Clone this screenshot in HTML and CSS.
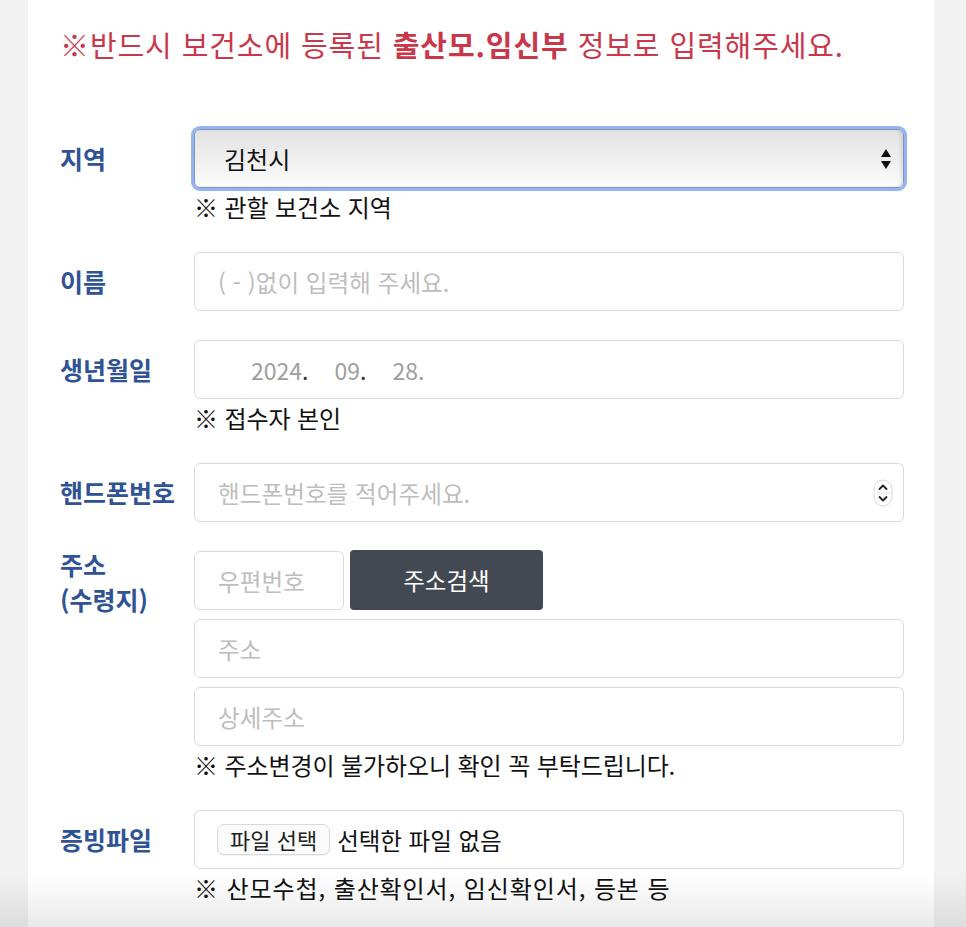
FILE: index.html
```html
<!DOCTYPE html>
<html lang="ko">
<head>
<meta charset="utf-8">
<title>출산모 정보 입력</title>
<link rel="stylesheet" href="styles.css">
</head>
<body>
<div class="page">
  <h2 class="notice">※반드시 보건소에 등록된 <strong>출산모.임신부</strong> 정보로 입력해주세요.</h2>

  <div class="row first">
    <div class="label">지역</div>
    <div class="control">
      <div class="select">
        <span class="select-value">김천시</span>
        <svg class="select-arrows" width="12" height="22" viewBox="0 0 12 22">
          <path d="M6 1 L11 9 L1 9 Z" fill="#111"/>
          <path d="M1 13 L11 13 L6 21 Z" fill="#111"/>
        </svg>
      </div>
      <p class="note">※ 관할 보건소 지역</p>
    </div>
  </div>

  <div class="row no-note">
    <div class="label">이름</div>
    <div class="control">
      <div class="field"><span class="ph">( - )없이 입력해 주세요.</span></div>
    </div>
  </div>

  <div class="row">
    <div class="label">생년월일</div>
    <div class="control">
      <div class="field date">
        <span class="seg">2024</span><span class="dot">.</span>
        <span class="seg">09</span><span class="dot">.</span>
        <span class="seg">28</span><span class="dot small">.</span>
      </div>
      <p class="note">※ 접수자 본인</p>
    </div>
  </div>

  <div class="row no-note">
    <div class="label">핸드폰번호</div>
    <div class="control">
      <div class="field phone">
        <span class="ph">핸드폰번호를 적어주세요.</span>
        <svg class="spinner" width="20" height="28" viewBox="0 0 20 28">
          <rect x="1" y="1" width="18" height="26" rx="9" fill="#fff" stroke="#d6d6d6"/>
          <line x1="3" y1="14" x2="17" y2="14" stroke="#e2e2e2"/>
          <path d="M6.5 10 L10 6.5 L13.5 10" fill="none" stroke="#222" stroke-width="1.8" stroke-linecap="round" stroke-linejoin="round"/>
          <path d="M6.5 18 L10 21.5 L13.5 18" fill="none" stroke="#222" stroke-width="1.8" stroke-linecap="round" stroke-linejoin="round"/>
        </svg>
      </div>
    </div>
  </div>

  <div class="row">
    <div class="label two-line">주소<br>(수령지)</div>
    <div class="control">
      <div class="zip-line">
        <div class="field zip"><span class="ph">우편번호</span></div>
        <button class="search-btn" type="button">주소검색</button>
      </div>
      <div class="field stacked"><span class="ph">주소</span></div>
      <div class="field stacked"><span class="ph">상세주소</span></div>
      <p class="note">※ 주소변경이 불가하오니 확인 꼭 부탁드립니다.</p>
    </div>
  </div>

  <div class="row">
    <div class="label">증빙파일</div>
    <div class="control">
      <div class="field file">
        <span class="file-btn">파일 선택</span>
        <span class="file-none">선택한 파일 없음</span>
      </div>
      <p class="note wide">※ 산모수첩, 출산확인서, 임신확인서, 등본 등</p>
    </div>
  </div>
</div>
</body>
</html>
```

FILE: styles.css
```css
html, body {
  margin: 0;
  padding: 0;
  background: #f2f2f2;
}

body {
  font-family: "Noto Sans CJK KR", "Noto Sans", sans-serif;
  color: #111;
  min-height: 927px;
  overflow: hidden;
}

body::after {
  content: "";
  position: fixed;
  left: 0;
  right: 0;
  bottom: 0;
  height: 52px;
  background: linear-gradient(to bottom, rgba(0,0,0,0), rgba(0,0,0,0.085));
  pointer-events: none;
}

.page {
  margin-left: 28px;
  width: 906px;
  min-height: 927px;
  background: #fff;
  box-sizing: border-box;
  padding: 24px 30px 0 32px;
}

.notice {
  margin: 0;
  font-size: 29px;
  line-height: 40px;
  font-weight: 400;
  color: #c9374b;
  letter-spacing: 0.9px;
}

.notice strong {
  font-weight: 700;
}

.row {
  display: grid;
  grid-template-columns: 134px 1fr;
  margin-top: 26px;
}

.row.first {
  margin-top: 65px;
}

.row.no-note {
  padding-bottom: 3px;
}

.label {
  font-size: 25px;
  font-weight: 700;
  color: #2f5394;
  line-height: 59px;
  white-space: nowrap;
}

.label.two-line {
  line-height: 35px;
  margin-top: -4px;
}

.control {
  display: flex;
  flex-direction: column;
}

.select {
  height: 59px;
  box-sizing: border-box;
  border: 1px solid #7f93bd;
  border-radius: 6px;
  box-shadow: 0 0 0 3px #93b3f1, inset -3px 0 3px rgba(0,0,0,0.08);
  background: linear-gradient(to bottom, #e3e3e3 0%, #f0f0f0 55%, #fcfcfc 100%);
  display: flex;
  align-items: center;
  justify-content: space-between;
  padding: 0 11px 0 29px;
}

.select-value {
  font-size: 24px;
  color: #111;
}

.note {
  margin: 0;
  font-size: 24px;
  line-height: 38px;
  color: #111;
  letter-spacing: -0.1px;
}

.note.wide {
  letter-spacing: 0.9px;
}

.field {
  height: 59px;
  box-sizing: border-box;
  border: 1px solid #dadada;
  border-radius: 6px;
  background: #fff;
  display: flex;
  align-items: center;
  padding: 0 23px;
}

.ph {
  font-size: 23.5px;
  color: #bdbdbd;
  letter-spacing: 0.1px;
}

.date {
  padding-left: 56px;
  font-size: 23px;
  color: #9e9e9e;
}

.date .dot {
  color: #333;
  margin-right: 26px;
}

.date .dot.small {
  color: #9e9e9e;
}

.phone {
  justify-content: space-between;
  padding-right: 10px;
}

.zip-line {
  display: flex;
  gap: 6px;
  margin-bottom: 9px;
}

.zip {
  width: 150px;
}

.search-btn {
  width: 193px;
  height: 60px;
  margin-top: -1px;
  border: none;
  border-radius: 4px;
  background: #434952;
  color: #fff;
  font-family: inherit;
  font-size: 23.5px;
  padding: 0;
  cursor: pointer;
}

.field.stacked + .field.stacked {
  margin-top: 9px;
}

.file {
  padding-left: 22px;
  gap: 7px;
}

.file-btn {
  height: 31px;
  box-sizing: border-box;
  padding: 0 12px;
  border: 1px solid #d9d9d9;
  border-radius: 7px;
  background: #fbfbfb;
  font-size: 22px;
  line-height: 29px;
  color: #222;
  box-shadow: 0 1px 1px rgba(0,0,0,0.06);
}

.file-none {
  font-size: 23.5px;
  color: #111;
}
```
